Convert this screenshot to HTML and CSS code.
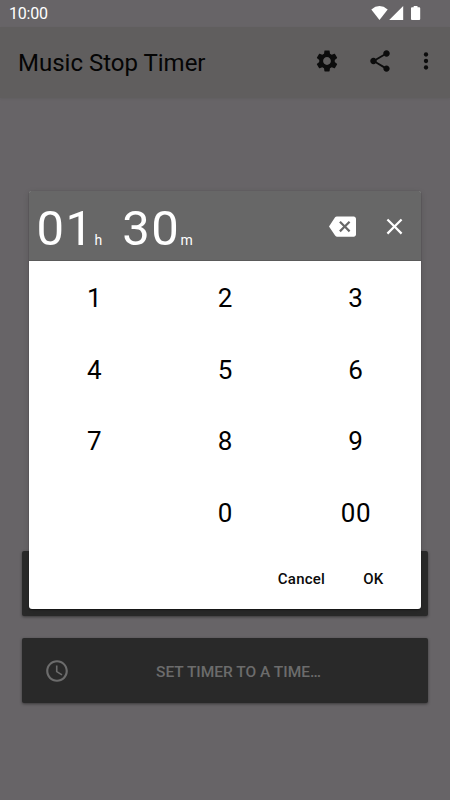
FILE: index.html
```html
<!DOCTYPE html>
<html lang="en">
<head>
<meta charset="utf-8">
<title>Music Stop Timer</title>
<link rel="stylesheet" href="styles.css">
</head>
<body>
<div class="screen">
  <div class="status">
    <span class="clock">10:00</span>
    <svg class="status-icons" width="50" height="16" viewBox="0 0 50 16" fill="#fff"><path d="M0.3 4.5Q8.500 -2.3 16.700 4.500L8.500 15Z"/><path d="M32.200 1V15H18.200Z"/><path d="M42.700 1h3.800v1.200h1.700q1 0 1 1v10.800q0 1-1 1h-7.200q-1 0-1-1V3.200q0-1 1-1h1.700z"/></svg>
  </div>
  <header class="appbar">
    <h1 class="title">Music Stop Timer</h1>
    <svg class="icon settings" viewBox="0 0 24 24"><path d="M19.140 12.940c.04-.3.060-.610.060-.940 0-.320-.020-.640-.070-.940l2.030-1.580c.180-.140.230-.410.120-.610l-1.920-3.320c-.120-.220-.370-.290-.590-.220l-2.390.960c-.500-.380-1.030-.700-1.620-.940l-.360-2.540c-.040-.240-.240-.410-.480-.410h-3.840c-.240 0-.430.170-.470.410l-.360 2.540c-.590.240-1.130.570-1.620.940l-2.390-.960c-.220-.080-.470 0-.590.220L2.740 8.870c-.120.210-.080.470.120.610l2.030 1.580c-.050.300-.090.630-.090.940s.020.640.070.940l-2.030 1.580c-.180.140-.230.410-.120.610l1.920 3.320c.120.220.370.290.590.220l2.390-.960c.500.380 1.030.700 1.620.940l.360 2.540c.050.240.240.410.480.410h3.840c.240 0 .440-.170.470-.410l.360-2.540c.590-.240 1.130-.560 1.620-.940l2.390.960c.220.080.470 0 .590-.220l1.920-3.320c.120-.220.070-.470-.120-.610l-2.010-1.580zM12 15.600c-1.980 0-3.600-1.620-3.600-3.600s1.620-3.600 3.600-3.600 3.600 1.620 3.600 3.600-1.620 3.600-3.600 3.600z"/></svg>
    <svg class="icon share" viewBox="0 0 24 24"><path d="M18 16.080c-.760 0-1.440.300-1.960.770L8.910 12.700c.050-.230.090-.460.090-.700s-.040-.470-.090-.700l7.050-4.110c.540.500 1.250.810 2.040.810 1.660 0 3-1.340 3-3s-1.340-3-3-3-3 1.340-3 3c0 .240.040.470.090.700L8.040 9.810C7.500 9.310 6.790 9 6 9c-1.660 0-3 1.340-3 3s1.340 3 3 3c.790 0 1.500-.310 2.040-.810l7.120 4.160c-.050.210-.080.430-.080.650 0 1.610 1.310 2.920 2.920 2.920s2.920-1.310 2.920-2.920-1.310-2.920-2.920-2.920z"/></svg>
    <svg class="icon more" viewBox="0 0 24 24"><circle cx="12" cy="6" r="2"/><circle cx="12" cy="12" r="2"/><circle cx="12" cy="18" r="2"/></svg>
  </header>
  <main class="content">
    <div class="button"></div>
    <div class="button">
      <svg class="timeicon" viewBox="0 0 24 24"><path d="M11.990 2C6.470 2 2 6.480 2 12s4.470 10 9.990 10C17.520 22 22 17.520 22 12S17.520 2 11.990 2zM12 20c-4.420 0-8-3.580-8-8s3.580-8 8-8 8 3.580 8 8-3.580 8-8 8zM12.500 7H11v6l5.250 3.150.750-1.230-4.500-2.670z"/></svg>
      <span class="label">SET TIMER TO A TIME…</span>
    </div>
  </main>
</div>
<div class="dialog">
  <div class="display">
    <span class="big">01</span><span class="unit hours">h</span>
    <span class="big">30</span><span class="unit">m</span>
    <svg class="backspace" viewBox="0 0 24 24"><path d="M22 3H7c-.690 0-1.230.350-1.590.880L0 12l5.410 8.110c.360.530.900.890 1.590.890h15c1.100 0 2-.900 2-2V5c0-1.100-.900-2-2-2zm-3 12.590L17.590 17 14 13.410 10.410 17 9 15.590 12.590 12 9 8.410 10.410 7 14 10.590 17.590 7 19 8.410 15.410 12 19 15.590z"/></svg>
    <svg class="clear" viewBox="0 0 24 24"><path d="M19 6.410L17.590 5 12 10.590 6.410 5 5 6.410 10.590 12 5 17.590 6.410 19 12 13.410 17.590 19 19 17.590 13.410 12z"/></svg>
  </div>
  <div class="keys">
    <span>1</span><span>2</span><span>3</span>
    <span>4</span><span>5</span><span>6</span>
    <span>7</span><span>8</span><span>9</span>
    <span></span><span>0</span><span>00</span>
  </div>
  <div class="actions"><span>Cancel</span><span>OK</span></div>
</div>
</body>
</html>
```

FILE: styles.css
```css
* { box-sizing: border-box; }
body { margin: 0; font-family: Roboto, sans-serif; background: #676467; }
.screen { width: 450px; height: 800px; display: flex; flex-direction: column; overflow: hidden; }
.status { height: 27px; display: flex; justify-content: space-between; padding: 5px 29px 0 9px; color: #fff; }
.clock { font-size: 16px; line-height: 18px; letter-spacing: -0.2px; }
.status-icons { flex: none; }
.appbar { height: 71px; background: #605e5e; display: flex; align-items: center; padding: 0 11px 2px 18px; box-shadow: 0 1px 2px rgba(0, 0, 0, 0.06); }
.title { margin: 0; padding-top: 2px; font-size: 24px; font-weight: 400; line-height: 28px; color: #050505; flex: 1; white-space: nowrap; }
.icon { width: 26px; height: 26px; fill: #0c0c0c; flex: none; margin-bottom: 1px; }
.share { margin-left: 27px; }
.more { margin-left: 20px; }
.content { flex: 1; display: flex; flex-direction: column; gap: 22px; padding: 453px 22px 0; }
.button { height: 65px; flex: none; background: #292929; border-radius: 2px; box-shadow: 0 1px 3px rgba(0, 0, 0, 0.45); display: flex; align-items: center; padding: 0 22px; }
.timeicon { width: 26px; height: 26px; fill: #6c6c6c; }
.label { flex: 1; margin-left: 1px; padding-top: 2px; text-align: center; font-size: 15.500px; font-weight: 500; color: #6c6c6c; white-space: nowrap; }
.dialog { position: absolute; left: 29px; top: 191px; width: 392px; height: 418px; background: #fff; border-radius: 3px; display: flex; flex-direction: column; box-shadow: 0 0 1px 0 rgba(0, 0, 0, 0.3), 0 1px 1px rgba(0, 0, 0, 0.4), 0 2px 6px rgba(0, 0, 0, 0.15); }
.display { height: 70px; background: #676767; border-radius: 2px 2px 0 0; border-bottom: 1px solid #5a5a5a; display: flex; align-items: baseline; padding: 9px 13px 0 7.500px; color: #fff; }
.big { font-size: 49px; line-height: 58px; letter-spacing: 1.500px; }
.unit { font-size: 14px; }
.hours { margin-right: 20px; }
.backspace, .clear { width: 27px; height: 27px; fill: #fff; align-self: flex-start; margin-top: 13px; flex: none; }
.backspace { margin-left: auto; }
.clear { margin-left: 25.500px; }
.keys { height: 287px; display: grid; grid-template-columns: repeat(3, 1fr); grid-template-rows: repeat(4, 71.500px); place-items: center; font-size: 26px; letter-spacing: 0.700px; text-indent: 0.700px; color: #000; padding-top: 1.500px; }
.actions { display: flex; justify-content: flex-end; gap: 38px; padding: 22px 37.500px 0 0; font-size: 15px; font-weight: 500; line-height: 18px; letter-spacing: 0.250px; color: #0a0a0a; }
```
